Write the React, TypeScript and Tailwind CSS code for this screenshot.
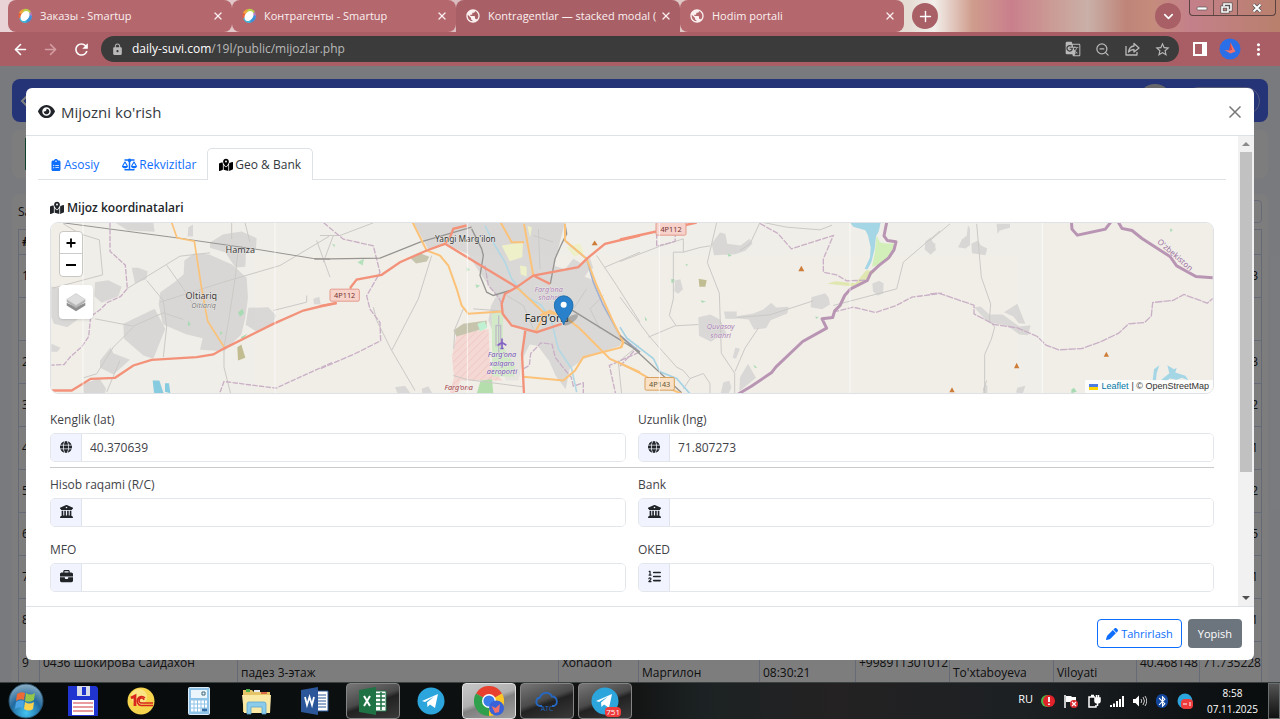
import type { ReactNode } from 'react';
import { ArrowLeft, ArrowRight, ChevronDown, Plus, X, ZoomOut } from 'lucide-react';
import {
  FaBriefcase,
  FaBuildingColumns,
  FaClipboardList,
  FaEye,
  FaGlobe,
  FaListOl,
  FaMapLocationDot,
  FaPen,
  FaScaleBalanced,
} from 'react-icons/fa6';
import {
  MdBluetooth,
  MdGTranslate,
  MdLock,
  MdMoreVert,
  MdPublic,
  MdRefresh,
  MdStarBorder,
} from 'react-icons/md';

/* ---------- Browser window ---------- */

function SmartupIcon() {
  return (
    <svg viewBox="0 0 16 16" className="size-4 shrink-0" aria-hidden="true">
      <path d="M2 5A7 7 0 0 1 8 1l-1 4-4 4Z" fill="#f0a53a" />
      <path d="M7 1a7 7 0 0 1 7 3l-2 3-6-3Z" fill="#b9cf4a" />
      <path d="M14 4a7 7 0 0 1 0 7l-4 0 1-5Z" fill="#b77bc0" />
      <path d="M15 8a7 7 0 0 1-7 7l0-4 5-4Z" fill="#3f8fd8" />
      <path d="M9 15a7 7 0 0 1-7-5l3-1 5 3Z" fill="#45b6d8" />
      <path d="M2 11a7 7 0 0 1 0-6l3 1Z" fill="#e8613c" />
      <ellipse cx="8" cy="8" rx="4" ry="5.400" transform="rotate(35 8 8)" fill="#fff" />
    </svg>
  );
}

function BrowserTab({ icon, title, active }: { icon: ReactNode; title: string; active?: boolean }) {
  return (
    <div
      className={
        active
          ? 'flex w-56 items-center rounded-t-lg bg-[#a95f66] pr-1.5 pl-[9px] text-[#fbeff0]'
          : 'flex w-56 items-center rounded-lg bg-[#b4676d] pr-1.5 pl-[9px] text-[#fbeff0]'
      }
    >
      {icon}
      <span className="ml-[7px] min-w-0 flex-1 text-[11px] leading-4 whitespace-nowrap">{title}</span>
      <button aria-label="Close tab" className="grid size-4 place-items-center">
        <X size={12} strokeWidth={2.6} />
      </button>
    </div>
  );
}

function TabStrip() {
  return (
    <div className="flex h-8 items-stretch bg-[linear-gradient(90deg,#ead3d6_0%,#d9b9bb_40%,#e5dcd4_71%,#f2eeea_73%,#cf9c8c_76%,#c97f8c_79%,#cb9a94_82%,#c9b0a8_85%,#bf8478_88%,#c58c7c_90%,#c4808a_93%,#b9806c_100%)] pl-2">
      <BrowserTab icon={<SmartupIcon />} title="Заказы - Smartup" />
      <BrowserTab icon={<SmartupIcon />} title="Контрагенты - Smartup" />
      <BrowserTab active icon={<MdPublic size={16} className="shrink-0" />} title="Kontragentlar — stacked modal (" />
      <BrowserTab icon={<MdPublic size={16} className="shrink-0" />} title="Hodim portali" />
      <button aria-label="New tab" className="ml-2 grid size-[26px] place-items-center self-center rounded-full bg-[#a95f66] text-white">
        <Plus size={17} />
      </button>
      <div className="flex-1" />
      <button aria-label="Search tabs" className="mr-2 grid size-[26px] place-items-center self-center rounded-full bg-[#a95f66] text-white">
        <ChevronDown size={15} strokeWidth={2.6} />
      </button>
      <div className="mr-1 flex h-4 items-stretch rounded-b border border-t-0 border-[#5b4341] text-white">
        <button aria-label="Minimize" className="grid w-6 place-items-center border-r border-[#6b504c]">
          <svg viewBox="0 0 12 8" className="h-2 w-3"><rect x="1" y="3" width="10" height="3" rx="1" fill="#fff" stroke="#555" strokeWidth=".7" /></svg>
        </button>
        <button aria-label="Restore" className="grid w-6 place-items-center border-r border-[#6b504c]">
          <svg viewBox="0 0 14 12" className="h-3 w-3.5" fill="none">
            <path d="M5 4V2h7v6h-2M3 5h6v5H3Z" stroke="#555" strokeWidth="3" />
            <path d="M5 4V2h7v6h-2M3 5h6v5H3Z" stroke="#fff" strokeWidth="1.6" />
          </svg>
        </button>
        <button aria-label="Close window" className="grid w-[37px] place-items-center">
          <svg viewBox="0 0 12 10" className="h-2.5 w-3" fill="none">
            <path d="m2.500 1.500 7 7m0-7-7 7" stroke="#555" strokeWidth="3.600" />
            <path d="m2.500 1.500 7 7m0-7-7 7" stroke="#fff" strokeWidth="2" />
          </svg>
        </button>
      </div>
    </div>
  );
}

function Toolbar() {
  return (
    <div className="flex h-[34px] items-center bg-[#a95e65] px-3 text-white">
      <button aria-label="Back" className="mr-[13px]"><ArrowLeft size={17} strokeWidth={2.3} /></button>
      <button aria-label="Forward" className="mr-[13px] text-[#d39da2]"><ArrowRight size={17} strokeWidth={2.3} /></button>
      <button aria-label="Reload" className="mr-2.5"><MdRefresh size={19} /></button>
      <div className="flex h-[26px] flex-1 items-center rounded-full bg-[#3b3b3b] pr-2 pl-2.5 text-[#b9b9b9]">
        <MdLock size={13} className="mr-2" />
        <a href="#url" className="flex-1 text-[12px] leading-4"><span className="text-white">daily-suvi.com</span>/19l/public/mijozlar.php</a>
        <div className="flex items-center gap-3.5">
          <button aria-label="Translate"><MdGTranslate size={16} /></button>
          <button aria-label="Zoom"><ZoomOut size={15} /></button>
          <button aria-label="Share">
            <svg viewBox="0 0 16 16" className="size-4" fill="none" stroke="currentColor" strokeWidth="1.300" strokeLinejoin="round">
              <path d="M2 5v9h11v-3M10 2.500 15 7l-5 4V8.500C7.500 8.500 6 9.300 4.500 11 5 7.500 7 5.300 10 5Z" />
            </svg>
          </button>
          <button aria-label="Bookmark"><MdStarBorder size={17} /></button>
        </div>
      </div>
      <button aria-label="Side panel" className="ml-3.5">
        <svg viewBox="0 0 14 14" className="size-3.5"><path d="M1 1h12v12H1Z" fill="none" stroke="#fff" strokeWidth="2" /><path d="M9 1h4v12H9Z" fill="#fff" /></svg>
      </button>
      <button aria-label="Profile" className="ml-3">
        <svg viewBox="0 0 22 22" className="size-[22px]">
          <circle cx="11" cy="11" r="10.500" fill="#2b6fe8" />
          <path d="M11.500 4.500 16.500 13.500l-5 2-6-3.500 5 .5Z" fill="#f0726a" />
          <path d="M11.500 4.500 13 12l-3 .5Z" fill="#c84450" />
        </svg>
      </button>
      <button aria-label="Menu" className="ml-2"><MdMoreVert size={19} /></button>
    </div>
  );
}

/* ---------- Page under the dialog ---------- */

const rows = [
  ['1', '3'], ['', ''], ['2', '3'], ['3', '2'], ['4', '1'], ['5', '2'], ['6', '5'], ['7', '1'], ['8', '1'],
];

function CustomerPage() {
  return (
    <div className="flex h-full flex-col overflow-hidden bg-[#f3f5fc] px-3 pt-[13px] text-[12px] leading-[18px] text-[#222]">
      <div className="flex h-[43px] shrink-0 items-center rounded-lg bg-[#4a66ef] px-2 text-white">
        <svg viewBox="0 0 8 12" className="h-3 w-2"><path d="M7 1 2 6l5 5" fill="none" stroke="#fff" strokeWidth="2" /></svg>
        <div className="flex-1" />
        <div className="mr-3 size-[34px] rounded-full bg-[#cfcfd2]" />
        <div className="h-7 w-[76px] rounded-full border border-[#aab4ee]" />
      </div>
      <div className="mt-2 flex h-12 shrink-0 rounded-lg bg-[#fbfbfd] px-[13px] py-2">
        <div className="h-full w-6 border border-[#198754]" />
      </div>
      <div className="mt-4 flex min-h-0 flex-1 flex-col rounded-t-lg bg-[#fbfbfd] px-1.5 pt-1.5">
        <div className="flex h-[23px] shrink-0 items-center justify-between">
          <span>Sahifada</span>
          <span className="h-full w-40 rounded border border-[#cfd6ee]" />
        </div>
        <table className="mt-1.5 w-full table-fixed border-collapse whitespace-nowrap">
          <colgroup>
            <col className="w-[21px]" />
            <col className="w-[198px]" />
            <col />
            <col className="w-20" />
            <col className="w-[121px]" />
            <col className="w-24" />
            <col className="w-[94px]" />
            <col className="w-[104px]" />
            <col className="w-[83px]" />
            <col className="w-[63px]" />
            <col className="w-[62px]" />
          </colgroup>
          <tbody>
            <tr className="h-[25px]">
              <th className="border border-[#ccd4ee] px-[3px] text-left">#</th>
              <th colSpan={10} className="border border-[#ccd4ee]" />
            </tr>
            {rows.map(([left, right], i) => (
              <tr key={i} className="h-[43px]">
                <td className="border border-[#ccd4ee] px-[3px]">{left}</td>
                <td colSpan={10} className="border border-[#ccd4ee] px-[3px] text-right">{right}</td>
              </tr>
            ))}
            <tr className="h-[43px]">
              <td className="border border-[#ccd4ee] px-[3px]">9</td>
              <td className="border border-[#ccd4ee] px-[3px]">0436 Шокирова Сайдахон</td>
              <td className="border border-[#ccd4ee] px-[3px] pb-0.5 align-bottom">падез 3-этаж</td>
              <td className="border border-[#ccd4ee] px-[3px]">Xonadon</td>
              <td className="border border-[#ccd4ee] px-[3px] pb-0.5 align-bottom">Маргилон</td>
              <td className="border border-[#ccd4ee] px-[3px] pb-0.5 align-bottom">08:30:21</td>
              <td className="border border-[#ccd4ee] px-[3px]">+998911301012</td>
              <td className="border border-[#ccd4ee] px-[3px] pb-0.5 align-bottom">To'xtaboyeva</td>
              <td className="border border-[#ccd4ee] px-[3px] pb-0.5 align-bottom">Viloyati</td>
              <td className="border border-[#ccd4ee] px-[3px] text-right">40.468148</td>
              <td className="border border-[#ccd4ee] px-[3px] text-right">71.735228</td>
            </tr>
          </tbody>
        </table>
      </div>
    </div>
  );
}

/* ---------- Map ---------- */

function MapDrawing() {
  return (
    <svg viewBox="0 0 3486 513" preserveAspectRatio="xMidYMid slice" className="h-full w-full bg-[#f1eee8]" fontFamily="'Noto Sans', sans-serif" role="img" aria-label="Map of Farg'ona">
      <defs>
        <pattern id="hatch" width="16" height="16" patternUnits="userSpaceOnUse" patternTransform="rotate(45)">
          <rect width="16" height="16" fill="#f4d8d3" />
          <path d="M0 0v16" stroke="#f1c6c0" strokeWidth="4" />
        </pattern>
      </defs>

      {/* Oltiariq */}
      <g transform="translate(-153 -276)">
        <g fill="#d9d8d6">
          <path d="M553 390l30-22 45 4 68 30 44 40 4 60-8 60-12 50-52 50-72-4 8-35-50-12-70-30-12-60 5-36 42-30 28-24z" />
          <path d="M630 336l40-25 55-8 45 20-2 30-30 16-2 40-30 2-30-45-46-14z" />
          <path d="M370 580l94-45 32 60-36 90-30-10-58-50z" />
          <path d="M285 455l40-6 40 20-10 28-50 20-22-20zM154 468l60 10 28-8v90l-40 30-40-10-8-20zM395 412h20l28 10-4 24-34 12zM745 532l60-2 24 25-12 30-45 20-35-22zM345 276l115 0 4 28-80-4zM565 290l14-8v36h-16zM300 690l32-40 8 18 50 20-50 44-40-20zM248 760l50-16 20 30-6 24h-62zM154 640l28 12-10 12h-18zM940 505l18-6 4 22h-20z" />
        </g>
        <path d="M712 650l12-8 12 40-22 8z" fill="#c1bd92" />
        <path d="M458 750l20 0 14 42-30-5zM495 758l12 0 4 30-16-4z" fill="#86cbe0" />
        <path d="M714 545l14-10 4 14-12 10zM565 570l8 14-10 2zM660 602l8 4-6 8zM722 620l20-10-14 16z" fill="#a8dbb3" />
        <g fill="none" stroke="#cbc9c6" strokeWidth="3">
          <path d="M190 280l50 30 58 18 10 105-150 40M500 404l50 70 30 50M380 475l160-98 90-10M440 450l50 60 10 80-10 90M480 515l190-60 170-50 148-88M714 360l-8 80-20 130-14 80 0 60 20 80M285 565l115 22 90-40 60 20M400 590l-60 60-50 80-40 12M820 540l100-25 0-20M360 690l-40 95M950 330l40 110M695 276l0 50M735 276l15 60" />
        </g>
        <g fill="none" stroke="#c9b0c6" strokeWidth="4" strokeDasharray="16 4">
          <path d="M330 276v86l46 42 6 70-20 24-40 18-22 22-28 20-6 60-20 30-34 30-20 24-38 2M660 785l12-32 156 20 170-78" />
        </g>
        <path d="M190 277L530 322 780 358 940 384 990 386" fill="none" stroke="#979592" strokeWidth="3" />
        <path d="M515 276l16 46 52 10 20 130 20 110 52 82" fill="none" stroke="#fbc278" strokeWidth="5" />
        <path d="M153 780L215 780 272 745 345 742 400 705 455 688 590 680 640 672 670 655 820 580 910 540 960 528 1010 518" fill="none" stroke="#f3927a" strokeWidth="7" />
        <g fontSize="27" fill="#383838" textAnchor="middle" stroke="#f5f3ef" strokeWidth="2" paintOrder="stroke">
          <text x="721" y="368">Hamza</text>
          <text x="604" y="506">Oltiariq</text>
          <text x="611" y="533" fontSize="22" fontStyle="italic" fill="#777">Oltiariq</text>
        </g>
      </g>

      {/* Farg'ona */}
      <g transform="translate(807 -21)">
        <g fill="#d9d8d6">
          <path d="M460 21h275l-18 70-14 60 60 20 50 20 30 60 66 120-10 20-110 40-40 30-12 60-30-40-20-45-34-45-24-4-24 48-8 50h-36l-6-70-30-50-20-50 8-44 16-30-36-50-40-60-26-50z" />
          <path d="M280 21h180l40 90 6 60-50-50-80-34-50 16z" />
          <path d="M225 515l30-4 18 24h-40zM305 520l20-8 12 22h-30zM720 180l40-50 50 30-20 30-20 60-40-10zM770 150l40-22 10 30-30 10zM810 220l26 4-16 20z" />
        </g>
        <path d="M545 305l65 40-6 90-8 60-40 0-10-60z" fill="#e8e5e1" />
        <path d="M410 355l96-14 4 114 38 40-16 0-110 0-20 40h-14l14-50-6-60z" fill="url(#hatch)" />
        <path d="M400 345l30-20 70-10 0 22-50 14-40 12zM272 128l30-14 26 10-8 14-32 6z" fill="#c6c4ac" />
        <path d="M515 295l34-4v100l36 60-2 32-66 0z" fill="#d2eac8" />
        <path d="M528 330h14v60h-14zM536 300v120" fill="none" stroke="#c0bcc8" strokeWidth="4" />
        <path d="M482 495l34-4 4 44h-50z" fill="#b4dfad" />
        <path d="M472 325l22-8 8 20-22 10z" fill="#bff0d2" />
        <path d="M545 90l64-10-2 45-38 12zM740 95l40-12 12 30-30 10zM622 30l14 6-6 30zM600 150l20 4v30l-18-8z" fill="#edf0c8" />
        <path d="M112 140l20-10-4 20zM466 206l14 4-10 8zM36 86l8 0v10zM440 155l10 8-10 4z" fill="#b4e0bc" />
        <g fill="none" stroke="#cbc9c6" strokeWidth="3">
          <path d="M0 60l60 0 100-38M335 120l-40 130-80 155-45-90-10-40M215 405l70 120M430 280l-25 60-4 60M855 155l105-45M830 120l60 90 70 110M460 280l80 6M400 480l40 12 170 22M640 60l60 20M840 340l-30-60 40-40M40 60l-30 80M955 390l-60 50 10 96M655 40l5 120M560 240l50 30 30 70M800 220l-40 60" />
        </g>
        <g fill="none" stroke="#c9b0c6" strokeWidth="4" strokeDasharray="18 4">
          <path d="M10 21l60 50 90 20 20 80-40 70 10 40 30 40 2 55-80 40-102 44M495 150l10 60 30 34 10 20M610 460l18-10 4-36 20-20 10-12 34 4 10 40 20 26 28 34 6 26 30-10 0 40-30 24M958 410l-90 40 20 90" />
        </g>
        <path d="M495 30l30 60 30 50 20 50 40 50 50 30 30 50 20 80 40 60 15 70" fill="none" stroke="#b3d8e4" strokeWidth="5" />
        <path d="M740 80l60 50 20 70 30 70 50 90 60 50" fill="none" stroke="#9fb0d4" strokeWidth="5" />
        <path d="M-17 131L180 128 300 80 455 35M455 40l30 60 5 20-10 60 20 50 20 10 50-15M735 25l5 30-15 30-20 45-14 75M750 280l210 130" fill="none" stroke="#979592" strokeWidth="4" />
        <g fill="none" stroke="#fbc278" strokeWidth="6">
          <path d="M278 21l42 84 40 15 25 30 25 70 15 50 20 25 100-7M542 21l33 59h37M612 25l28 155M735 25v50l65 55 30 80 50 110 30 60-5 15-115 30-25 40-35 30-120-11M590 215l80 75 60 10 50 40 90 90 90 40M685 290l-20 24-20 36M660 300l30-14 30 14" />
        </g>
        <path d="M0 272l50-10M92 220V215l18-23 75-14 55-38 80-35 55-20 215 130 50-35 135-25 25-25 55-45 105-25M375 85l15-20 10-25 40-10M590 215l-35 20-10 30 3 30 27 35 75 20 30-10 45-15M640 180l50 25M616 346l-10 70 6 120" fill="none" stroke="#f3927a" strokeWidth="7" />
        <rect x="30" y="221" width="88" height="36" rx="4" fill="#f7d3ca" stroke="#e3998b" strokeWidth="3" />
        <text x="74" y="248" fontSize="22" textAnchor="middle" fill="#733">4P112</text>
        <path d="M815 89l9-14 9 14z" fill="#ce7d38" />
        <path d="M546 369v30m-13-10 13-8 13 8m-18 10h10" stroke="#8461c4" strokeWidth="5" fill="none" />
        <g textAnchor="middle" stroke="#f5f3ef" strokeWidth="2" paintOrder="stroke">
          <text x="436" y="80" fontSize="25" fill="#333">Yangi Marg'ilon</text>
          <text x="680" y="319" fontSize="33" fill="#222">Farg'ona</text>
          <g fontStyle="italic" fontSize="22">
            <g fill="#a57bb0"><text x="686" y="228">Farg'ona</text><text x="686" y="253">shahri</text></g>
            <g fill="#7152b0"><text x="546" y="424">Farg'ona</text><text x="546" y="450">xalqaro</text><text x="546" y="475">aeroporti</text></g>
            <text x="416" y="524" fill="#a13a43">Farg'ona</text>
          </g>
        </g>
        <ellipse cx="752" cy="313" rx="26" ry="10" transform="rotate(-35 752 313)" fill="#555" opacity=".35" />
        <path d="M731 328c-5-19-28-36-28-59a28 28 0 0 1 56 0c0 23-23 40-28 59z" fill="#2a81cb" stroke="#2270ae" strokeWidth="3" />
        <circle cx="731" cy="268" r="9" fill="#fff" />
      </g>

      {/* Quvasoy */}
      <g transform="translate(1707 -21)">
        <g fill="#d9d8d6">
          <path d="M275 85l25-34 16 4 6 30 40 5 26-20 10 14-22 22-30 10-64 3zM165 195l16-4 8 30-14 14-12-8zM235 305l36-8 30 16 20 44-28 8-20 14-36-18zM312 288l38 0v22h-34zM350 302l50-8 30-12 24-20 14 14 38-2-4 20-50 20-14 24-36 4-16-30-36-4zM574 245l42-12 10 14 4 20-24 14-34-6zM757 204l20-8 14 8-2 30-16 6-14-12zM916 78l16-12 16 36-16 16-18-16zM360 485l24-40 24 42-50 40zM310 500l18-4 6 20-8 18h-24zM346 396l14 4-12 30-10-4z" />
        </g>
        <path d="M690 21H782L776 48 768 62 764 100 754 140 742 162 734 160 750 126 752 96 744 60 736 44 700 34z" fill="#a5d6e6" />
        <path d="M770 60l10 20 16 4 32 0-10 30-40 34-22 6 8-40z" fill="#d2efb9" />
        <path d="M738 165l30 0-30 30-40 18-76-8 24-8 60 6z" fill="#e0e6b0" />
        <path d="M236 190l24 4-4 20h-18z" fill="#c1bd92" />
        <path d="M154 190l10 2-2 10h-8zM242 254l16 4-12 4zM322 114l14 6-10 4zM74 302l8 12-6 2zM586 302l10 4-8 4zM400 447l12 10h-8zM196 146l8 0-4 6z" fill="#a8dbb3" />
        <g fill="none" stroke="#cbc9c6" strokeWidth="3">
          <path d="M290 21l-28 120 36 92 6 180 40 60 0 60M0 138l120-46 70-22 0 40-30 0 0 140-12 50 20 30M85 365l80-34 70-4M350 306l100-8 130-42M420 21l-30 64-30 20M345 468l30-70 40-60M190 110l50-14 30-5M430 21l70 14 100 8 36-14M0 245l90 120 80 90 20 10 20 24 40-15 20 30 0 30M640 270l190-50 20-80 110-94M210 490l-20 30" />
        </g>
        <path d="M420 24l54 30 40 46 126-40-30 70 0 40 40 8 30 18 60-2M640 290l60-15 66 16 60-20 50-26 90-12M110 30v62l55-14 2-40M0 452l46-50" fill="none" stroke="#c9b0c6" strokeWidth="4" strokeDasharray="18 4" />
        <path d="M800 21l-8 40 10 14 26 4-6 24-16 24-28 22-26 24-10 22-50 25-18 20-14 30-16 16-6 20-32 4 14 28-72 40-80 76-14 18-60 40-40 24" fill="none" stroke="#b995b4" strokeWidth="9" strokeLinejoin="round" />
        <path d="M0 335l20 32 80 62 20 40 50 20 40 46" fill="none" stroke="#a5d3e3" strokeWidth="5" />
        <path d="M0 360l120 112 65 60" fill="none" stroke="#979592" strokeWidth="4" />
        <path d="M0 443l60 30 60 34 70 30M0 365q16 14 0 32" fill="none" stroke="#fbc278" strokeWidth="6" />
        <path d="M0 72l230-51" fill="none" stroke="#f3927a" strokeWidth="7" />
        <rect x="108" y="21" width="90" height="38" rx="4" fill="#f7d3ca" stroke="#e3998b" strokeWidth="3" />
        <rect x="75" y="486" width="88" height="38" rx="4" fill="#fae1c5" stroke="#d7a05d" strokeWidth="3" />
        <g fontSize="22" textAnchor="middle"><text x="153" y="48" fill="#733">4P112</text><text x="119" y="513" fill="#653">4P143</text></g>
        <path d="M535 167l9-16 9 16z" fill="#ce7d38" />
        <g textAnchor="middle" fontStyle="italic" fontSize="22" fill="#a57bb0" stroke="#f5f3ef" strokeWidth="2" paintOrder="stroke">
          <text x="302" y="341">Quvasoy</text><text x="302" y="367">shahri</text>
        </g>
      </g>

      {/* Eastern border */}
      <g transform="translate(2637 -276)">
        <path d="M114 284l6 10 0 50-14 10-22-4 12-24 14-10zM124 340l20-10 8 14 20 10-6 20-40-6zM200 280l40 0v12l-30 8-8 10zM0 330l16 10 0 20-16 8zM132 530l20-2 26 24 40 0 50 36 34-4-8 30-26-2-36-26-60-12zM222 545l40-25 24 60-20-2-16-20zM162 764l10 0v26h-14zM262 772l24-6-8 24-20-4z" fill="#d9d8d6" />
        <path d="M140 280l14 160 28 80-4 50 16 20-10 36-20 46 0 118M0 330l60-50M160 780l10-30" fill="none" stroke="#cbc9c6" strokeWidth="3" />
        <path d="M0 490l26-2 106 36 0 26 60 32 70 10 60 26 26 26 38 14 70-4 60-22 50-24 30-28 48-4 20-20 4-40 60-6 34-18 70 26 16-14" fill="none" stroke="#c9b0c6" strokeWidth="4" strokeDasharray="22 3" />
        <path d="M424 270l2 26 16 18 84-18 20-26M562 270l14 24 30 6 30 24 84 54 20 28 58 32 50 4" fill="none" stroke="#b995b4" strokeWidth="9" />
        <path d="M720 294l8 4-6 8z" fill="#a8dbb3" />
        <path d="M424 778l8-6 8 12-16 4z" fill="#a8dbb3" />
        <path d="M668 750l4-34 16-12-8 24-2 22zM694 748l24-20-6-24 20 12 8-4-4 14 30 10 10 14-20-8-16 6-20-4-12 8z" fill="#a5d6e6" />
        <path d="M252 713l8-16 8 16zM521 679l8-15 8 15zM58 785l8-15 8 15z" fill="#ce7d38" />
        <text x="680" y="336" transform="rotate(41 680 336)" fontSize="24" fill="#9b73a0" stroke="#f5f3ef" strokeWidth="2" paintOrder="stroke">O'zbekiston</text>
      </g>

      {/* Seams between tiles */}
      <path d="M96 0v513M672 0v513M1249 0v513M1825 0v513M2397 0v513M2974 0v513" stroke="#fff" strokeWidth="2.500" opacity=".8" />
    </svg>
  );
}

function MapPanel() {
  return (
    <div className="relative h-[172px] overflow-hidden rounded-lg border border-[#dee2e6]">
      <MapDrawing />
      <div className="absolute top-2 left-2 flex flex-col gap-2">
        <div className="flex w-6 flex-col rounded-sm border border-[#c9c8c5] bg-white text-black">
          <button aria-label="Zoom in" className="grid h-[22px] place-items-center border-b border-[#ccc]">
            <svg viewBox="0 0 12 12" className="size-3"><path d="M6 1.500v9M1.500 6h9" stroke="#000" strokeWidth="1.800" /></svg>
          </button>
          <button aria-label="Zoom out" className="grid h-[22px] place-items-center">
            <svg viewBox="0 0 12 12" className="size-3"><path d="M1 6h10" stroke="#000" strokeWidth="1.800" /></svg>
          </button>
        </div>
        <button aria-label="Layers" className="grid size-[34px] place-items-center rounded bg-white shadow">
          <svg viewBox="0 0 26 26" className="size-[22px]">
            <path d="m2 17 11 7 11-7v-3l-11 5-11-5z" fill="#8f8f8f" />
            <path d="m2 13 11 7 11-7v-3l-11 5-11-5z" fill="#b5b5b5" />
            <path d="m2 10 11 7 11-7-11-7z" fill="#dedede" stroke="#bdbdbd" strokeWidth=".6" />
          </svg>
        </button>
      </div>
      <div className="absolute right-0 bottom-0 flex items-center gap-[3px] bg-white/80 px-1 font-['Liberation_Sans',sans-serif] text-[9px] leading-[13px] text-[#333]">
        <svg viewBox="0 0 9 6" className="h-1.5 w-[9px]"><path d="M0 0h9v3H0z" fill="#4c7be1" /><path d="M0 3h9v3H0z" fill="#ffd500" /></svg>
        <a href="#leaflet" className="text-[#0078a8]">Leaflet</a>
        <span>| © OpenStreetMap</span>
      </div>
    </div>
  );
}

/* ---------- Dialog ---------- */

function Field({ id, label, icon, value = '' }: { id: string; label: string; icon: ReactNode; value?: string }) {
  return (
    <div className="min-w-0">
      <label htmlFor={id} className="mb-1 block text-[12px] leading-[18px] text-[#3f4348]">{label}</label>
      <div className="flex h-[29px] overflow-hidden rounded-[5px] border border-[#e3e6ea]">
        <span className="grid w-[31px] shrink-0 place-items-center border-r border-[#dfe3ec] bg-[#f1f4ff] pb-0.5 text-[#212529]">{icon}</span>
        <input id={id} defaultValue={value} className="min-w-0 flex-1 bg-white px-2 pt-px text-[12px] text-[#3f4348] outline-none" />
      </div>
    </div>
  );
}

function ScrollTrack() {
  return (
    <div aria-hidden="true" className="flex w-4 shrink-0 flex-col items-center bg-[#f1f1f1]">
      <svg viewBox="0 0 8 16" className="h-4 w-2"><path d="m0 10 4-4 4 4z" fill="#8a8a8a" /></svg>
      <div className="h-[320px] w-3 bg-[#c1c1c1]" />
      <div className="flex-1" />
      <svg viewBox="0 0 8 16" className="h-4 w-2"><path d="m0 6 4 4 4-4z" fill="#505050" /></svg>
    </div>
  );
}

function CustomerDialog() {
  return (
    <section role="dialog" aria-labelledby="dialog-title" className="flex h-full w-full flex-col overflow-hidden rounded-md bg-white text-[#212529]">
      <header className="flex h-12 shrink-0 items-center gap-1.5 border-b border-[#dee2e6] pr-[11px] pl-3">
        <FaEye size={17} />
        <h1 id="dialog-title" className="flex-1 text-[15px] leading-5 text-[#343a40]">Mijozni ko'rish</h1>
        <button aria-label="Close" className="grid size-4 place-items-center text-[#777]">
          <svg viewBox="0 0 14 14" className="size-3.5"><path d="m1.500 1.500 11 11m0-11-11 11" stroke="currentColor" strokeWidth="1.500" /></svg>
        </button>
      </header>
      <div className="flex min-h-0 flex-1">
        <div className="min-w-0 flex-1 overflow-hidden px-3 pt-3">
          <div role="tablist" className="flex h-8 border-b border-[#dee2e6] text-[12px] leading-[18px] text-[#0d6efd]">
            <button role="tab" className="flex items-center gap-0.5 px-3 pt-0.5"><FaClipboardList size={12} />Asosiy</button>
            <button role="tab" className="flex items-center gap-0.5 px-[11px] pt-0.5"><FaScaleBalanced size={15} />Rekvizitlar</button>
            <button role="tab" aria-selected="true" className="-mb-px flex items-center gap-0.5 rounded-t-[5px] border border-b-0 border-[#dee2e6] bg-white px-[11px] text-[#33383d]">
              <FaMapLocationDot size={14} className="text-black" />Geo &amp; Bank
            </button>
          </div>
          <div className="px-3 pt-[19px]">
            <h2 className="mb-[5px] flex items-center gap-[3px] text-[12px] leading-[18px] font-semibold"><FaMapLocationDot size={14} />Mijoz koordinatalari</h2>
            <MapPanel />
            <div className="mt-[17px] grid grid-cols-2 gap-x-3">
              <Field id="lat" label="Kenglik (lat)" icon={<FaGlobe size={12} />} value="40.370639" />
              <Field id="lng" label="Uzunlik (lng)" icon={<FaGlobe size={12} />} value="71.807273" />
            </div>
            <hr className="mt-[5px] mb-2 border-[#c8cacc]" />
            <div className="grid grid-cols-2 gap-x-3 gap-y-3.5">
              <Field id="account" label="Hisob raqami (R/C)" icon={<FaBuildingColumns size={13} />} />
              <Field id="bank" label="Bank" icon={<FaBuildingColumns size={13} />} />
              <Field id="mfo" label="MFO" icon={<FaBriefcase size={13} />} />
              <Field id="oked" label="OKED" icon={<FaListOl size={13} />} />
            </div>
          </div>
        </div>
        <ScrollTrack />
      </div>
      <footer className="flex h-[54px] shrink-0 items-center justify-end gap-1.5 border-t border-[#dee2e6] pr-3 text-[11px] leading-[18px]">
        <button className="flex h-[29px] items-center gap-[3px] rounded border border-[#0d6efd] px-2 text-[#0d6efd]"><FaPen size={12} />Tahrirlash</button>
        <button className="h-[29px] rounded bg-[#6c757d] px-2.5 text-white">Yopish</button>
      </footer>
    </section>
  );
}

/* ---------- Windows taskbar ---------- */

function TelegramIcon({ badge }: { badge?: string }) {
  return (
    <span className="relative block">
      <svg viewBox="0 0 28 28" className="size-7">
        <circle cx="14" cy="14" r="13.500" fill="#2ca5dc" />
        <path d="m5 14 16-7-3 14-5-3.500-2.500 2.500-.5-4.500 7-6-9 5.500z" fill="#fff" />
      </svg>
      {badge && <span className="absolute -right-0.5 -bottom-0.5 rounded-sm bg-[#ee3c3c] px-px text-[8px] leading-[10px] text-white">{badge}</span>}
    </span>
  );
}

const apps: { name: string; state: 'idle' | 'open' | 'focused'; icon: ReactNode }[] = [
  {
    name: 'Total Commander', state: 'idle',
    icon: (
      <svg viewBox="0 0 30 30" className="size-[30px]">
        <path d="M0 0h28l2 2v28H0z" fill="#2034d0" /><path d="M9 0h13v10H9z" fill="#d8dce8" /><path d="M14 1h4v8h-4z" fill="#2034d0" />
        <path d="M4 14h22v15H4z" fill="#fff" /><path d="M5 17h20M5 21h20M5 25h20" stroke="#d03840" strokeWidth="1.200" />
      </svg>
    ),
  },
  {
    name: '1C', state: 'idle',
    icon: (
      <svg viewBox="0 0 28 28" className="size-7">
        <circle cx="14" cy="14" r="13.500" fill="#f6d44e" /><circle cx="12" cy="10" r="8" fill="#fdeb9a" opacity=".7" />
        <path d="m4 11 4-2v10" fill="none" stroke="#d8261c" strokeWidth="2.800" />
        <path d="M18 11a4.500 4.500 0 1 0-4 7.500h12M17 13a2.500 2.500 0 1 0-3 3h12" fill="none" stroke="#d8261c" strokeWidth="1.600" />
      </svg>
    ),
  },
  {
    name: 'Calculator', state: 'idle',
    icon: (
      <svg viewBox="0 0 22 28" className="h-7 w-[22px]">
        <rect x=".5" y=".5" width="21" height="27" rx="1" fill="#8fc3e8" stroke="#dcecf8" /><path d="M3 3h16v8H3z" fill="#eaf5fc" /><path d="M14 8h3V5h-3z" fill="none" stroke="#467" />
        <path d="M3 15h16M3 19h16M3 23h16" stroke="#fff" strokeWidth="2.800" strokeDasharray="2.500 1" /><path d="M14 23h5" stroke="#346fa8" strokeWidth="2.800" />
      </svg>
    ),
  },
  {
    name: 'Explorer', state: 'idle',
    icon: (
      <svg viewBox="0 0 30 28" className="h-7 w-[30px]">
        <path d="M1 3h9l2 2h16v20H1z" fill="#e6c568" /><path d="M4 2h4v3H4z" fill="#4fae4b" /><path d="M12 3h6v2h-6z" fill="#e8ecf2" /><path d="M19 5h6v2h-6z" fill="#d96a47" />
        <path d="M0 8h29l-1 18H2z" fill="#fae9a5" /><path d="M5 27V17q0-2 2-2h15q2 0 2 2v10h-4v-7H9v7z" fill="#8ccbea" stroke="#5ba6d2" strokeWidth=".8" />
      </svg>
    ),
  },
  {
    name: 'Word', state: 'idle',
    icon: (
      <svg viewBox="0 0 28 28" className="size-7">
        <path d="M14 4h13v20H14z" fill="#fff" stroke="#2b579a" /><path d="M17 8h8M17 11h8M17 14h8M17 17h8M17 20h8" stroke="#2b579a" /><path d="m0 3 17-3v28L0 25z" fill="#2b579a" />
        <path d="m4 10 2 8 2.500-8 2.500 8 2-8" fill="none" stroke="#fff" strokeWidth="1.800" />
      </svg>
    ),
  },
  {
    name: 'Excel', state: 'open',
    icon: (
      <svg viewBox="0 0 28 28" className="size-7">
        <path d="M14 4h13v20H14z" fill="#fff" stroke="#1f7244" /><path d="M17 7h9M17 11h9M17 15h9M17 19h9M22 5v18" stroke="#1f7244" strokeWidth="1.500" /><path d="m0 3 17-3v28L0 25z" fill="#1f7244" />
        <path d="m5 9 6 10m0-10L5 19" stroke="#fff" strokeWidth="2" />
      </svg>
    ),
  },
  { name: 'Telegram', state: 'idle', icon: <TelegramIcon /> },
  {
    name: 'Chrome', state: 'focused',
    icon: (
      <svg viewBox="0 0 30 30" className="size-[30px]">
        <path d="M15 15 2 7.500a15 15 0 0 1 26 0z" fill="#e8402f" /><path d="M15 15h0L28 7.500A15 15 0 0 1 15 30z" fill="#fcc624" /><path d="M15 15v15A15 15 0 0 1 2 7.500z" fill="#2fa04c" />
        <circle cx="15" cy="15" r="7" fill="#fff" /><circle cx="15" cy="15" r="5.600" fill="#3a7de8" />
        <circle cx="22.500" cy="22" r="7.500" fill="#3a62d8" /><path d="m17.500 20 4 2 4.500-4-1 8-4 1z" fill="#f0726a" />
      </svg>
    ),
  },
  {
    name: 'ATC', state: 'open',
    icon: (
      <span className="relative block">
        <svg viewBox="0 0 24 20" className="h-5 w-6"><path d="M7 15H5a4.300 4.300 0 0 1 0-8.500 6.500 6.500 0 0 1 12-1A5 5 0 0 1 19 15h-2" fill="none" stroke="#2469c4" strokeWidth="1.800" /></svg>
        <span className="absolute inset-x-0 -bottom-0.5 text-center text-[7px] leading-[8px] text-[#2469c4]">ATC</span>
      </span>
    ),
  },
  { name: 'Telegram chats', state: 'open', icon: <TelegramIcon badge="751" /> },
];

const appStyles = {
  idle: 'grid h-9 w-[54px] place-items-center',
  open: 'grid h-9 w-[54px] place-items-center rounded-sm border border-[#858585] bg-[linear-gradient(160deg,#777_0%,#4a4a4a_45%,#222_55%,#3a3a3a_100%)]',
  focused: 'grid h-9 w-[54px] place-items-center rounded-sm border border-[#e0e0e0] bg-[linear-gradient(160deg,#c8c8c8_0%,#b0b0b0_45%,#808080_55%,#a0a0a0_100%)]',
};

function Taskbar() {
  return (
    <footer className="flex h-[37px] shrink-0 items-center gap-1 border-t border-[#3b4140] bg-[linear-gradient(90deg,#050909,#0c1010_30%,#111_48%,#1c2223_55%,#242223_65%,#1c2023_80%,#090c0d)] text-white">
      <button aria-label="Start" className="grid w-[52px] place-items-center">
        <svg viewBox="0 0 36 36" className="size-9">
          <defs><radialGradient id="orb" cx=".5" cy=".85" r=".9"><stop offset="0" stopColor="#43c4f2" /><stop offset=".5" stopColor="#226aa0" /><stop offset="1" stopColor="#9cb8c8" /></radialGradient></defs>
          <circle cx="18" cy="18" r="17" fill="url(#orb)" stroke="#28516c" />
          <path d="M9 11q4-3 8-1l-1 7q-4-2-8 1z" fill="#ec6a36" /><path d="M18 10q4 3 9 0l-1 7q-4 3-9 1z" fill="#94c64a" /><path d="M8 19q4-3 8-1l-1 7q-4-2-8 1z" fill="#4aa3e4" /><path d="M17 19q4 3 9 0l-1 7q-4 3-9 0z" fill="#fcd24c" />
        </svg>
      </button>
      {apps.map((app) => (
        <button key={app.name} aria-label={app.name} className={appStyles[app.state]}>{app.icon}</button>
      ))}
      <div className="flex-1" />
      <span className="mr-1 pb-1 text-[11px]">RU</span>
      <div className="mr-2.5 flex items-center gap-[9px]">
        <svg viewBox="0 0 14 14" className="size-3.5"><circle cx="6" cy="7" r="6" fill="#4eb848" /><circle cx="8" cy="7" r="6" fill="#e0232a" /><path d="M8 3v5m0 1.500v1.500" stroke="#fff" strokeWidth="1.800" /></svg>
        <svg viewBox="0 0 14 14" className="size-3.5"><path d="M1 1v13" stroke="#fff" strokeWidth="1.500" /><path d="M2 2h5l1 1h4v6H7L6 8H2z" fill="#fff" /><circle cx="10" cy="10" r="4" fill="#d9282e" /><path d="m8 8 4 4m0-4-4 4" stroke="#fff" strokeWidth="1.200" /></svg>
        <svg viewBox="0 0 14 14" className="size-3.5" fill="none" stroke="#fff" strokeWidth="1.500"><path d="M8 3H2v10h7v-2M4 1.500h3" /><path d="M8 4h5v3q0 2-2.500 2T8 7zM9.500 4V1M11.500 4V1M10.500 9v3" fill="#fff" /></svg>
        <svg viewBox="0 0 14 14" className="size-3.5"><path d="M1 13v-2M4 13V9.500M7 13V7M10 13V5M13 13V2" stroke="#fff" strokeWidth="2" /></svg>
        <svg viewBox="0 0 14 14" className="size-3.5" fill="none"><path d="M0 5h2.500L6 1.500v11L2.500 9H0z" fill="#fff" /><path d="M8 5q1.500 2 0 4m2-6q3 4 0 8m2-9q3.500 5 0 10" stroke="#ddd" strokeWidth=".9" /></svg>
        <span className="grid h-3.5 w-3 place-items-center rounded-full bg-[#12469c]"><MdBluetooth size={13} /></span>
        <svg viewBox="0 0 16 16" className="size-4"><circle cx="8" cy="8" r="7.500" fill="#2ca5dc" /><rect x="4" y="6" width="12" height="10" rx="4" fill="#ee3c3c" /><path d="M6 11h4m3-2v4" stroke="#fff" /></svg>
      </div>
      <div className="mr-1.5 text-center text-[10px] leading-4"><div>8:58</div><div>07.11.2025</div></div>
      <button aria-label="Show desktop" className="h-full w-3 border border-[#6a6e6e] bg-linear-to-b from-[#555] to-[#111]" />
    </footer>
  );
}

export default function App() {
  return (
    <div className="flex h-screen flex-col overflow-hidden font-['Open_Sans','Noto_Sans',sans-serif]">
      <header className="shrink-0">
        <TabStrip />
        <Toolbar />
      </header>
      <main className="relative min-h-0 flex-1">
        <CustomerPage />
        <div className="absolute inset-0 bg-black/50 px-[26px] py-[22px]">
          <CustomerDialog />
        </div>
      </main>
      <Taskbar />
    </div>
  );
}
